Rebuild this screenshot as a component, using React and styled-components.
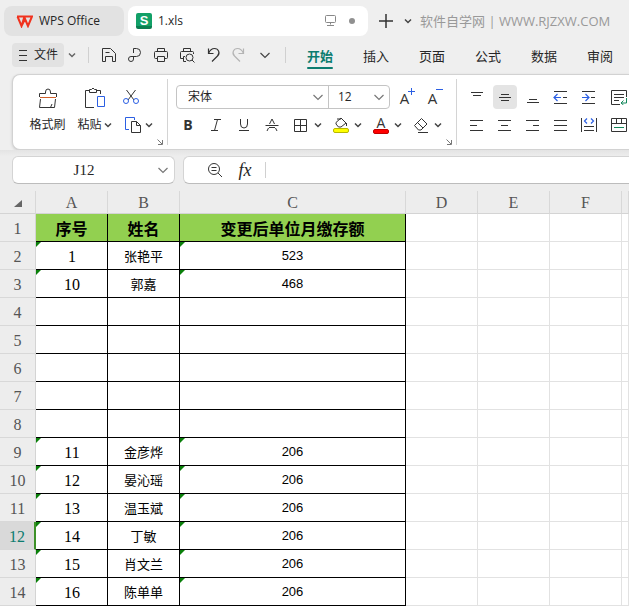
import React, { useState } from 'react'
import styled, { createGlobalStyle } from 'styled-components'

const ui = '"Open Sans", "Noto Sans CJK SC", sans-serif'
const song = '"Liberation Serif", "Noto Sans CJK SC", serif'
const teal = '#0c7c6f'
const blue = '#2b5fe3'

const GlobalStyle = createGlobalStyle`
  * {
    box-sizing: border-box;
  }
  body {
    margin: 0;
    overflow: hidden;
    background: #efefef;
    color: #262626;
    font: 12px/16px ${ui};
  }
  button, input, select {
    margin: 0;
    padding: 0;
    border: 0;
    outline: 0;
    background: none;
    color: inherit;
    font: inherit;
  }
`

const TabBar = styled.header`
  display: flex;
  align-items: center;
  gap: 4px;
  height: 36px;
  padding: 6px 0 0 4px;
`

const FileTab = styled.button`
  display: flex;
  flex: none;
  align-items: center;
  gap: 6px;
  width: ${(props) => props.$width};
  height: 30px;
  padding: 0 8px 0 ${(props) => (props.$active ? '8px' : '12px')};
  border-radius: 8px;
  background: ${(props) => (props.$active ? '#fff' : '#e2e2e2')};
`

const TabState = styled.span`
  display: flex;
  margin-left: auto;
`

const SheetLogo = styled.span`
  width: 16px;
  height: 16px;
  border-radius: 2px;
  background: linear-gradient(#12a067 13px, #0a7d50 13px);
  color: #fff;
  font: bold 13px/16px "Liberation Sans", sans-serif;
  text-align: center;
`

const Watermark = styled.span`
  margin-left: 4px;
  color: #999;
  font-size: 13px;
  white-space: nowrap;
`

const MenuBar = styled.nav`
  display: flex;
  align-items: center;
  height: 38px;
  padding-left: 12px;
`

const FileButton = styled.button`
  display: flex;
  flex: none;
  align-items: center;
  justify-content: center;
  gap: 6px;
  width: 52px;
  height: 24px;
  border-radius: 4px;
  background: #e2e2e2;
`

const IconButton = styled.button`
  display: flex;
  flex: none;
  align-items: center;
  justify-content: ${(props) => (props.$start ? 'flex-start' : 'center')};
  width: ${(props) => props.$width || '28px'};
  height: 24px;
  border-radius: 4px;
  background: ${(props) => (props.$active ? '#e4e4e4' : 'none')};
`

const Rule = styled.span`
  flex: none;
  width: 1px;
  height: 16px;
  margin: ${(props) => props.$margin || '0'};
  background: #d0d0d0;
`

const MenuTab = styled.button`
  position: relative;
  flex: none;
  width: 56px;
  height: 28px;
  padding-top: 2px;
  color: ${(props) => (props.$active ? teal : '#262626')};
  font-size: 13px;
  font-weight: ${(props) => (props.$active ? 'bold' : 'normal')};

  &::after {
    content: '';
    position: absolute;
    right: 15px;
    bottom: 0;
    left: 15px;
    height: 2px;
    border-radius: 1px;
    background: ${(props) => (props.$active ? teal : 'none')};
  }
`

const Ribbon = styled.section`
  display: flex;
  height: 76px;
  margin-left: 12px;
  border: 1px solid #d2d2d2;
  border-right: 0;
  border-radius: 8px 0 0 8px;
  background: #fff;
  box-shadow: 0 1px 3px rgba(0, 0, 0, 0.15);
`

const Group = styled.div`
  position: relative;
  display: flex;
  flex: none;
  flex-direction: ${(props) => (props.$column ? 'column' : 'row')};
  padding: 8px ${(props) => props.$right || '0'} 0 ${(props) => props.$left};
`

const Separator = styled.span`
  flex: none;
  width: 1px;
  height: 66px;
  margin-top: 4px;
  background: #d4d4d4;
`

const Launcher = styled.button`
  position: absolute;
  right: 3px;
  bottom: 3px;
  display: flex;
`

const BigTool = styled.button`
  display: flex;
  flex-direction: column;
  align-items: center;
  width: 47px;
  height: 56px;
  padding-top: 4px;
`

const ToolLabel = styled.span`
  display: flex;
  align-items: center;
  gap: 2px;
  height: 20px;
  margin-top: 6px;
  white-space: nowrap;
`

const Stack = styled.div`
  display: flex;
  flex-direction: column;
  width: 46px;
`

const ToolRow = styled.div`
  display: flex;
  align-items: center;
  height: 28px;
  padding-left: ${(props) => props.$indent || '0'};
`

const FontBox = styled.div`
  display: flex;
  width: 214px;
  height: 24px;
  margin-right: 4px;
  border: 1px solid #c4c4c4;
  border-radius: 4px;
`

const Picker = styled.label`
  display: flex;
  flex: ${(props) => (props.$grow ? '1' : 'none')};
  align-items: center;
  width: 61px;
  padding-right: 2px;
  border-left: ${(props) => (props.$grow ? '0' : '1px solid #c4c4c4')};

  select {
    flex: 1;
    min-width: 0;
    padding-left: ${(props) => (props.$grow ? '11px' : '9px')};
    appearance: none;
  }
`

// the icon next to it draws only the plus or minus
const FontLetter = styled.span`
  color: #333;
  font-size: ${(props) => props.$size || '14px'};
  font-weight: ${(props) => (props.$bold ? 'bold' : 'normal')};
  line-height: ${(props) => props.$line || '20px'};
`

const SizeIcon = styled.span`
  display: flex;
  padding-top: 2px;

  svg {
    margin-left: -1px;
  }
`

const ColorIcon = styled.span`
  display: flex;
  flex-direction: column;
  align-items: center;
`

const AlignGrid = styled.div`
  display: grid;
  grid-template-columns: repeat(5, 28px) 32px;
  grid-auto-rows: 28px;
  align-items: center;
  justify-items: center;
`

const FormulaRow = styled.div`
  display: flex;
  gap: 8px;
  padding: 6px 0 7px 12px;
  background: linear-gradient(#e4e4e4, #ededed 6px);
`

const Field = styled.div`
  display: flex;
  flex: ${(props) => (props.$grow ? '1' : 'none')};
  align-items: center;
  width: ${(props) => (props.$grow ? 'auto' : '163px')};
  height: 28px;
  padding: ${(props) => (props.$grow ? '0 0 0 16px' : '0 3px 0 0')};
  border: 1px solid #d4d4d4;
  border-right-width: ${(props) => (props.$grow ? '0' : '1px')};
  border-bottom-color: #bcbcbc;
  border-radius: ${(props) => (props.$grow ? '6px 0 0 6px' : '6px')};
  background: #fff;

  input {
    flex: 1;
    min-width: 0;
    font: 15px/20px ${song};
    text-align: ${(props) => (props.$grow ? 'left' : 'center')};
  }
`

const FunctionSign = styled.span`
  font: italic 18px/20px "Liberation Serif", serif;
`

const Sheet = styled.table`
  width: 100%;
  border-collapse: separate;
  border-spacing: 0;
  table-layout: fixed;
  background: #fff;
`

const Col = styled.col`
  width: ${(props) => props.$width};
`

const ColumnHead = styled.th`
  height: 23px;
  padding: 2px 0 0;
  border-right: 1px solid #d8d8d8;
  border-bottom: 1px solid #d4d4d4;
  background: #ededed;
  color: #555;
  font: 16px/20px ${song};
`

const RowHead = styled.th`
  height: 28px;
  padding: 2px 0 0;
  border-right: ${(props) => (props.$active ? '2px solid #3d9128' : '1px solid #d4d4d4')};
  border-bottom: 1px solid #d8d8d8;
  background: ${(props) => (props.$active ? '#d9d9d9' : '#ededed')};
  color: ${(props) => (props.$active ? teal : '#555')};
  font: 16px/20px ${song};
`

const Cell = styled.td`
  position: relative;
  height: 28px;
  padding: 0;
  border-right: 1px solid ${(props) => (props.$used ? '#000' : '#e2e2e2')};
  border-bottom: 1px solid ${(props) => (props.$used ? '#000' : '#e2e2e2')};
  color: #000;
  text-align: center;
`

const TitleCell = styled(Cell)`
  background: #92d050;
  font: bold 16px/20px "Noto Sans CJK SC", sans-serif;
`

const NumberCell = styled(Cell)`
  padding: 2px 0 0 1px;
  font: 16px/20px ${song};
`

const NameCell = styled(Cell)`
  font: 13px/20px "Noto Sans CJK SC", sans-serif;
`

const AmountCell = styled(Cell)`
  font: 13px/20px "Liberation Sans", sans-serif;
`

// green corner mark for numbers stored as text
const Mark = styled.span`
  position: absolute;
  top: 0;
  left: 0;
  border-top: 5px solid #0a800a;
  border-right: 5px solid transparent;
`

const Icon = ({ w = 16, h = 16, color = '#333', children }) => (
  <svg
    width={w}
    height={h}
    viewBox={`0 0 ${w} ${h}`}
    fill="none"
    stroke={color}
    aria-hidden="true"
  >
    {children}
  </svg>
)

const Chevron = ({ wide, color = '#444' }) =>
  wide ? (
    <Icon w={16} h={10} color={color}>
      <path d="M3.5 3l4.5 4.5L12.5 3" strokeWidth="1.2" />
    </Icon>
  ) : (
    <Icon w={8} h={8} color={color}>
      <path d="M1 2.5l3 3 3-3" strokeWidth="1.5" />
    </Icon>
  )

const LaunchIcon = () => (
  <Icon w={8} h={8} color="#777">
    <path d="M1.5 1.5l4.5 4.5M6.5 2v4.5H2" />
  </Icon>
)

const quickTools = [
  ['保存', <path d="M4.5 14.5h-3v-13h8l5 5v8h-3M4.5 14.5v-5h7v5M4.5 5.5h4" />],
  [
    '输出',
    <path d="M6.5 6V1.5h3a4 4 0 0 1 0 8H4a2.500 2.500 0 1 0 2.500 2.500V9" />
  ],
  [
    '打印',
    <path d="M4.5 4.5v-3h7v3M4 11.500H2.5q-1 0-1-1v-5q0-1 1-1h11q1 0 1 1v5q0 1-1 1H12M4.5 9.5h7v5h-7z" />
  ],
  [
    '打印预览',
    <g>
      <path d="M4.5 4.5v-3h7v3M4 11.500H1.5v-6q0-1 1-1h11q1 0 1 1v1.5M7 14.500H4.5v-5H6" />
      <circle cx="10.5" cy="10.5" r="3.5" />
      <path d="M13 13l2.500 2.500" />
    </g>
  ],
  [
    '撤销',
    <path d="M3.500 1.500V6.500H8.500M3.500 6.500C5 3 7 1.500 9.500 1.500c4 0 6 4.500 3 7.500L7 14.500" strokeWidth="1.200" />
  ],
  [
    '恢复',
    <path d="M12.500 1.500V6.500H7.500M12.500 6.500C11 3 9 1.500 6.500 1.500c-4 0-6 4.500-3 7.500L9 14.500" strokeWidth="1.200" />,
    '#b4b4b4'
  ]
]

const menus = ['开始', '插入', '页面', '公式', '数据', '审阅']

const alignTools = [
  ['顶端对齐', <path d="M2 3.5h12M4 6.5h8" />],
  ['垂直居中', <path d="M4 5.5h8M2 8.5h12M4 11.5h8" />],
  ['底端对齐', <path d="M4 10.5h8M2 13.5h12" />],
  [
    '减少缩进',
    <g>
      <path d="M1 2.5h13M10 8.5h4M1 14.5h13" />
      <path d="M1 8.5h7M4.5 5L1 8.500 4.500 12" stroke={blue} strokeWidth="1.200" />
    </g>
  ],
  [
    '增加缩进',
    <g>
      <path d="M1 2.5h13M10 8.5h4M1 14.5h13" />
      <path d="M1 8.5h7M4.500 5L8 8.500 4.500 12" stroke={blue} strokeWidth="1.200" />
    </g>
  ],
  [
    '自动换行',
    <g>
      <path d="M9 15.500H.5v-14h15V8M3 5.500h10M3 8.500h10M3 11.500h5" />
      <path d="M15.500 9v5h-5M12.500 11.500L10 14l2.500 2" stroke="#13875a" />
    </g>
  ],
  ['左对齐', <path d="M1 3.5h13M1 8.5h7M1 13.5h13" />],
  ['水平居中', <path d="M1 3.5h13M4 8.5h7M1 13.5h13" />],
  ['右对齐', <path d="M1 3.5h13M8 8.5h6M1 13.5h13" />],
  ['两端对齐', <path d="M1 3.5h13M1 8.5h13M1 13.5h13" />],
  [
    '分散对齐',
    <g>
      <path d="M.5 1v14M15.500 1v14M3 9.500h10M3 13.500h10" />
      <path d="M6 1.500L3.500 4 6 6.500M10 1.500L12.500 4 10 6.500" stroke={blue} strokeWidth="1.200" />
    </g>
  ],
  [
    '合并居中',
    <g>
      <path d="M.5 1.500h15v13H.5zM.5 6.500h15M5.500 1.500v5M10.500 1.500v5" />
      <path d="M3 10.500h10" stroke="#13875a" />
    </g>
  ]
]

const columns = [
  ['A', '72px'],
  ['B', '72px'],
  ['C', '226px'],
  ['D', '72px'],
  ['E', '72px'],
  ['F', '72px'],
  ['', 'auto']
]

const rows = [
  ['1', '张艳平', '523'],
  ['10', '郭嘉', '468'],
  [],
  [],
  [],
  [],
  [],
  ['11', '金彦烨', '206'],
  ['12', '晏沁瑶', '206'],
  ['13', '温玉斌', '206'],
  ['14', '丁敏', '206'],
  ['15', '肖文兰', '206'],
  ['16', '陈单单', '206']
]

function EmptyCells() {
  return (
    <>
      <Cell />
      <Cell />
      <Cell />
      <Cell />
    </>
  )
}

function Tabs() {
  return (
    <TabBar>
      <FileTab $width="120px">
        <Icon w={17} h={13} color="#f0321e">
          <path d="M1 1.500h7.500L5.500 11 1.500 1.500M8.500 1.500H16L12 11 8 1.500M5.500 11L9 4l3 7" strokeWidth="2" />
        </Icon>
        WPS Office
      </FileTab>
      <FileTab $width="240px" $active>
        <SheetLogo>S</SheetLogo>
        1.xls
        <TabState>
          <Icon w={36} h={16} color="#888">
            <rect x="1.5" y="2.5" width="10" height="7" rx="1" />
            <path d="M6.5 9.5v2M3 12.5h7" />
            <circle cx="28" cy="8" r="3" fill="#909090" stroke="none" />
          </Icon>
        </TabState>
      </FileTab>
      <IconButton aria-label="新建">
        <Icon>
          <path d="M8 1v14M1 8h14" strokeWidth="1.500" />
        </Icon>
      </IconButton>
      <IconButton aria-label="更多" $width="8px">
        <Chevron />
      </IconButton>
      <Watermark>软件自学网 | WWW.RJZXW.COM</Watermark>
    </TabBar>
  )
}

function Menu() {
  const [active, setActive] = useState('开始')

  return (
    <MenuBar>
      <FileButton>
        <Icon w={10}>
          <path d="M1 3.5h8M1 8.5h8M1 13.5h8" />
        </Icon>
        文件
      </FileButton>
      <IconButton aria-label="文件菜单" $width="16px">
        <Chevron color="#666" />
      </IconButton>
      <Rule $margin="0 7px 0 8px" />
      {quickTools.map(([label, drawing, color]) => (
        <IconButton key={label} aria-label={label} $width="26px">
          <Icon color={color}>{drawing}</Icon>
        </IconButton>
      ))}
      <IconButton aria-label="自定义" $width="26px">
        <Chevron wide />
      </IconButton>
      <Rule $margin="0 6px 0 7px" />
      {menus.map((name) => (
        <MenuTab
          key={name}
          $active={name === active}
          onClick={() => setActive(name)}
        >
          {name}
        </MenuTab>
      ))}
    </MenuBar>
  )
}

function Clipboard() {
  return (
    <Group $left="11px" $right="3px">
      <BigTool>
        <Icon w={20} h={22}>
          <path d="M1.500 10V6.500h6V5a2.500 3 0 1 1 5 0v1.500h6V10M2.500 12l-1 8.500h15l1-8.500M14 17l-1.500 3.500" />
          <path d="M2 10.500h16" stroke="#d0602a" />
        </Icon>
        <ToolLabel>格式刷</ToolLabel>
      </BigTool>
      <BigTool>
        <Icon w={22} h={22}>
          <path d="M5 3.500H1.500v17H10M13 3.500h3.500V7M5.500 5.500v-3h2q1.500-3 3 0h2v3z" />
          <path d="M13.500 9.500h7v10h-7z" stroke={blue} />
        </Icon>
        <ToolLabel>
          粘贴
          <Chevron />
        </ToolLabel>
      </BigTool>
      <Stack>
        <ToolRow>
          <IconButton aria-label="剪切" $width="26px">
            <Icon w={18}>
              <path d="M4.500 1L12 11M13.500 1L6 11" />
              <circle cx="4" cy="12" r="2.500" stroke={blue} />
              <circle cx="14" cy="12" r="2.500" stroke={blue} />
            </Icon>
          </IconButton>
        </ToolRow>
        <ToolRow $indent="5px">
          <IconButton aria-label="复制" $width="30px">
            <Icon w={22}>
              <path d="M6 12.500H2.500v-12h9V3" stroke={blue} />
              <path d="M8.500 4.500h5l4 4v7h-9zM13.500 4.500v4h4" />
            </Icon>
            <Chevron />
          </IconButton>
        </ToolRow>
      </Stack>
      <Launcher aria-label="剪贴板选项">
        <LaunchIcon />
      </Launcher>
    </Group>
  )
}

const fontTools = [
  [
    '边框',
    <Icon>
      <path d="M1.500 2.500h12v12h-12zM7.500 2.500v12M1.500 8.500h12" />
    </Icon>
  ],
  [
    '填充颜色',
    <Icon>
      <path d="M3 5.500L8 1l5 5-5 4H5.500L3 7zM4 2h4M13.500 6v3" />
      <rect x=".5" y="11.500" width="15" height="4" rx="1.500" fill="#ff0" stroke="#b8b800" />
    </Icon>
  ],
  [
    '字体颜色',
    <ColorIcon>
      <FontLetter $line="12px">A</FontLetter>
      <Icon h={5}>
        <rect x=".5" y=".5" width="15" height="4" rx="1.500" fill="#f00" stroke="#c00000" />
      </Icon>
    </ColorIcon>
  ],
  [
    '清除',
    <Icon>
      <path d="M1.500 8.500l7-7 5.500 5.500-6 6H5.500zM4.500 5.500L10 11M5 15.500h10" />
    </Icon>
  ]
]

function FontTools() {
  return (
    <Group $left="6px" $right="6px" $column>
      <ToolRow $indent="2px">
        <FontBox>
          <Picker $grow>
            <select aria-label="字体" defaultValue="宋体">
              <option>宋体</option>
            </select>
            <Chevron wide color="#777" />
          </Picker>
          <Picker>
            <select aria-label="字号" defaultValue="12">
              <option>12</option>
            </select>
            <Chevron wide color="#777" />
          </Picker>
        </FontBox>
        <IconButton aria-label="增大字号">
          <SizeIcon>
            <FontLetter $size="15px">A</FontLetter>
            <Icon w={8} h={10} color={blue}>
              <path d="M3.500 0v7M0 3.500h7" />
            </Icon>
          </SizeIcon>
        </IconButton>
        <IconButton aria-label="减小字号">
          <SizeIcon>
            <FontLetter $size="15px">A</FontLetter>
            <Icon w={8} h={10} color={blue}>
              <path d="M0 1.500h7" />
            </Icon>
          </SizeIcon>
        </IconButton>
      </ToolRow>
      <ToolRow>
        <IconButton aria-label="加粗">
          <FontLetter $bold>B</FontLetter>
        </IconButton>
        <IconButton aria-label="倾斜">
          <Icon>
            <path d="M6 2.500h7M3 13.500h7M9.500 2.500l-3 11" />
          </Icon>
        </IconButton>
        <IconButton aria-label="下划线">
          <Icon>
            <path d="M4.500 2v5a3.500 4 0 0 0 7 0V2M3 13.500h10" />
          </Icon>
        </IconButton>
        <IconButton aria-label="删除线">
          <Icon>
            <path d="M5.500 7L8 2l2.500 5M1.500 8.500h13M4.500 11L3 14M11.500 11l1.500 3M5 10.500h6" />
          </Icon>
        </IconButton>
        {fontTools.map(([label, drawing]) => (
          <ToolRow key={label} $indent="2px">
            <IconButton aria-label={label} $width="26px">
              {drawing}
            </IconButton>
            <IconButton aria-label={`${label}选项`} $width="12px" $start>
              <Chevron />
            </IconButton>
          </ToolRow>
        ))}
      </ToolRow>
      <Launcher aria-label="字体选项">
        <LaunchIcon />
      </Launcher>
    </Group>
  )
}

function Toolbar() {
  return (
    <Ribbon>
      <Clipboard />
      <Separator />
      <FontTools />
      <Separator />
      <Group $left="6px">
        <AlignGrid>
          {alignTools.map(([label, drawing]) => (
            <IconButton
              key={label}
              aria-label={label}
              $width="24px"
              $active={label === '垂直居中'}
            >
              <Icon>{drawing}</Icon>
            </IconButton>
          ))}
        </AlignGrid>
      </Group>
    </Ribbon>
  )
}

function FormulaBar() {
  return (
    <FormulaRow>
      <Field>
        <input aria-label="名称框" defaultValue="J12" />
        <Chevron wide color="#777" />
      </Field>
      <Field $grow>
        <IconButton aria-label="浏览公式" $width="30px">
          <Icon>
            <circle cx="7" cy="7" r="5.500" />
            <path d="M11 11l4 4M4.500 5.500h5M4.500 8.500h5" />
          </Icon>
        </IconButton>
        <IconButton aria-label="插入函数" $width="30px">
          <FunctionSign>fx</FunctionSign>
        </IconButton>
        <Rule $margin="0 8px 0 5px" />
        <input aria-label="编辑栏" />
      </Field>
    </FormulaRow>
  )
}

function Grid() {
  return (
    <Sheet>
      <colgroup>
        <Col $width="36px" />
        {columns.map(([name, width]) => (
          <Col key={name} $width={width} />
        ))}
      </colgroup>
      <thead>
        <tr>
          <ColumnHead>
            <Icon w={8} h={8}>
              <path d="M8 0v7H0z" fill="#666" stroke="none" />
            </Icon>
          </ColumnHead>
          {columns.map(([name]) => (
            <ColumnHead key={name}>{name}</ColumnHead>
          ))}
        </tr>
      </thead>
      <tbody>
        <tr>
          <RowHead>1</RowHead>
          <TitleCell $used>序号</TitleCell>
          <TitleCell $used>姓名</TitleCell>
          <TitleCell $used>变更后单位月缴存额</TitleCell>
          <EmptyCells />
        </tr>
        {rows.map(([number, name, amount], i) => (
          <tr key={i}>
            <RowHead $active={i + 2 === 12}>{i + 2}</RowHead>
            <NumberCell $used>
              {number && <Mark />}
              {number}
            </NumberCell>
            <NameCell $used>{name}</NameCell>
            <AmountCell $used>
              {amount && <Mark />}
              {amount}
            </AmountCell>
            <EmptyCells />
          </tr>
        ))}
      </tbody>
    </Sheet>
  )
}

export default function App() {
  return (
    <>
      <GlobalStyle />
      <Tabs />
      <Menu />
      <Toolbar />
      <FormulaBar />
      <Grid />
    </>
  )
}
